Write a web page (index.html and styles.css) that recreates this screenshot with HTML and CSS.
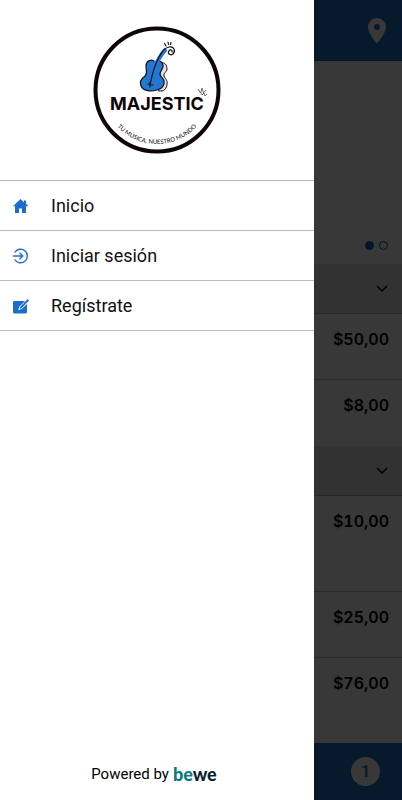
FILE: index.html
```html
<!DOCTYPE html>
<html lang="es">
<head>
    <meta charset="UTF-8">
    <meta name="viewport" content="width=device-width, initial-scale=1.0">
    <title>Majestic</title>
    <link rel="stylesheet" href="styles.css">
</head>
<body>
    <div class="page">
        <header class="top-bar">
            <button class="pin" type="button" aria-label="Ubicación">
                <svg width="18" height="26" viewBox="0 0 18 26"><path fill="#fff" fill-rule="evenodd" d="M9 0a9 9 0 0 0-9 9c0 6.500 9 16.500 9 16.500S18 15.500 18 9a9 9 0 0 0-9-9zm0 6a3 3 0 1 1 0 6 3 3 0 0 1 0-6z"/></svg>
            </button>
        </header>
        <div class="slider">
            <button class="dot active" type="button" aria-label="Imagen uno"></button>
            <button class="dot" type="button" aria-label="Imagen dos"></button>
        </div>
        <button class="section" type="button" aria-label="Abrir categoría">
            <svg width="12" height="8" viewBox="0 0 12 8"><path d="M1 1l5 5 5-5" fill="none" stroke="#000" stroke-width="1.500"/></svg>
        </button>
        <ul class="prices">
            <li>$50,00</li>
            <li>$8,00</li>
        </ul>
        <button class="section" type="button" aria-label="Abrir categoría">
            <svg width="12" height="8" viewBox="0 0 12 8"><path d="M1 1l5 5 5-5" fill="none" stroke="#000" stroke-width="1.500"/></svg>
        </button>
        <ul class="prices">
            <li class="tall">$10,00</li>
            <li>$25,00</li>
            <li>$76,00</li>
        </ul>
    </div>
    <footer class="cart-bar"><span class="count">1</span></footer>
    <div class="overlay"></div>

    <aside class="drawer">
        <div class="brand">
            <svg width="128" height="128" viewBox="0 0 128 128">
                <circle cx="64" cy="64" r="61.500" fill="#fff" stroke="#0d0506" stroke-width="4"/>
                <!-- guitarra -->
                <g stroke-linecap="round" stroke-linejoin="round">
                    <path fill="#e9dcd8" stroke="#111" stroke-width="1" d="M68 37c4-1 6 2 6 6 0 3-4 4-3 7 1 3 4 4 3 8 0 4-3 8-8 7z"/>
                    <path fill="#2277d0" stroke="#0b1420" stroke-width="1.200" d="M61 35c-3-2-8 0-8 5 0 4 2 7-1 10-4 3-6 6-4 10 2 5 10 6 16 4 5-1 8-5 7-9-1-4-4-4-4-7 0-4 4-5 3-9-1-4-4-5-7-3"/>
                    <path fill="none" stroke="#2277d0" stroke-width="4" stroke-linecap="butt" d="M62 40c3-6 6-12 11-17"/>
                    <path fill="none" stroke="#111" stroke-width="1.200" d="M57 59c2-10 5-21 9-28 3-6 6-9 10-10 5-1 7 4 4 7-3 2-6-1-4-3 1-2 4-1 3 1M55 58l5 1M57 56v5M73 20l-1.500-2.500M75.500 18.500l-.5-2.500M77.500 18.500l.5-2"/>
                </g>
                <text class="brand-name" x="64" y="84" text-anchor="middle">MAJESTIC</text>
                <path fill="none" stroke="#58484a" stroke-width=".8" d="M105 63l2.500 4 1.500-5 1.500 5 2.500-3M108 67l1 2 2-2 1 3 2-2"/>
                <path id="arc" fill="none" d="M10 64a54 54 0 0 0 108 0"/>
                <text class="slogan" text-anchor="middle"><textPath href="#arc" startOffset="50%">TU MÚSICA, NUESTRO MUNDO</textPath></text>
            </svg>
        </div>
        <nav class="menu">
            <a href="#inicio">
                <svg width="16" height="16" viewBox="0 0 16 16"><path fill="#1c6dcc" d="M7.500 1L0 8.300h2V15h4v-4.500h3V15h4V8.300h2.500L13 5.800V2.500h-2v1.800z"/></svg>
                <span>Inicio</span>
            </a>
            <a href="#sesion">
                <svg width="16" height="16" viewBox="0 0 16 16"><path fill="none" stroke="#1c6dcc" stroke-width="1.400" d="M1.700 4.500a6.800 6.800 0 1 1 0 7M0 8h10M6.500 4.800L9.700 8l-3.200 3.200"/></svg>
                <span>Iniciar sesión</span>
            </a>
            <a href="#registro">
                <svg width="16" height="16" viewBox="0 0 16 16"><path fill="#1c6dcc" d="M1.500 3H14v11a1.500 1.500 0 0 1-1.500 1.500h-11A1.500 1.500 0 0 1 0 14V4.500A1.500 1.500 0 0 1 1.500 3z"/><path d="M14 1L6.500 8.500 5 12.300l3.700-1.300L16 4z" fill="#fff"/><path d="M14.700 1L7.500 8.500 6.300 11.200l2.500-1.200L16 2.500z" fill="#1c6dcc"/></svg>
                <span>Regístrate</span>
            </a>
        </nav>
        <div class="powered">Powered by <span class="bewe"><span class="be">be</span>we</span></div>
    </aside>
</body>
</html>
```

FILE: styles.css
```css
*{
    padding: 0;
    margin: 0;
    box-sizing: border-box;
}
body{
    font-family: Roboto, sans-serif;
    background-color: #fff;
    color: #000;
}
button{
    border: none;
    background: none;
}
li{
    list-style: none;
}
svg{
    display: block;
}
.page{
    padding-bottom: 57px;
}
.top-bar{
    height: 61px;
    padding: 0 16px;
    background-color: #1f76c8;
    display: flex;
    align-items: center;
    justify-content: flex-end;
}
.slider{
    height: 203px;
    padding: 0 14px;
    display: flex;
    align-items: flex-end;
    justify-content: flex-end;
    gap: 5px;
    padding-bottom: 14px;
}
.dot{
    width: 9px;
    height: 9px;
    border: 1px solid #0050b0;
    border-radius: 50%;
}
.slider .active{
    background-color: #0f60b8;
}
.section{
    display: flex;
    width: 100%;
    height: 50px;
    padding: 0 14px;
    align-items: center;
    justify-content: flex-end;
    background-color: #e4e4e4;
    border-bottom: 1px solid #b4b4b4;
}
.prices li{
    height: 66px;
    padding: 14px 13px;
    font: 600 16px/22px Inter, sans-serif;
    font-variant-numeric: tabular-nums;
    text-align: right;
    border-bottom: 1px solid #c4c4c4;
}
.prices li:last-child{
    border-bottom: none;
}
.prices .tall{
    height: 96px;
}
.cart-bar{
    position: fixed;
    left: 0;
    right: 0;
    bottom: 0;
    height: 57px;
    padding: 0 22px;
    background-color: #1f76c8;
    display: flex;
    align-items: center;
    justify-content: flex-end;
}
.count{
    width: 29px;
    border-radius: 50%;
    background-color: #fff;
    color: #1f76c8;
    font-size: 17px;
    font-weight: 500;
    line-height: 29px;
    text-align: center;
}
.overlay{
    position: fixed;
    inset: 0;
    background-color: rgba(0, 0, 0, .78);
}
.drawer{
    position: fixed;
    top: 0;
    bottom: 0;
    left: 0;
    width: calc(100% - 88px);
    background-color: #fff;
    display: flex;
    flex-direction: column;
}
.brand{
    padding: 26px 0;
    display: flex;
    justify-content: center;
}
.brand-name{
    font: 700 18px Inter, sans-serif;
    fill: #0d0506;
}
.slogan{
    font: 500 6px Lato, sans-serif;
    fill: #222;
}
.menu{
    border-top: 1px solid #bbb;
}
.menu a{
    display: flex;
    align-items: center;
    gap: 22px;
    height: 50px;
    padding: 0 13px;
    border-bottom: 1px solid #bbb;
    color: #111;
    font-size: 18px;
    text-decoration: none;
}
.powered{
    margin-top: auto;
    padding: 0 6px 14px 0;
    display: flex;
    align-items: center;
    justify-content: center;
    gap: 4px;
    font-size: 15px;
    line-height: 24px;
}
.bewe{
    font: 900 18px/24px Lato, sans-serif;
    color: #0b1f2b;
}
.be{
    color: #087a80;
}
```
